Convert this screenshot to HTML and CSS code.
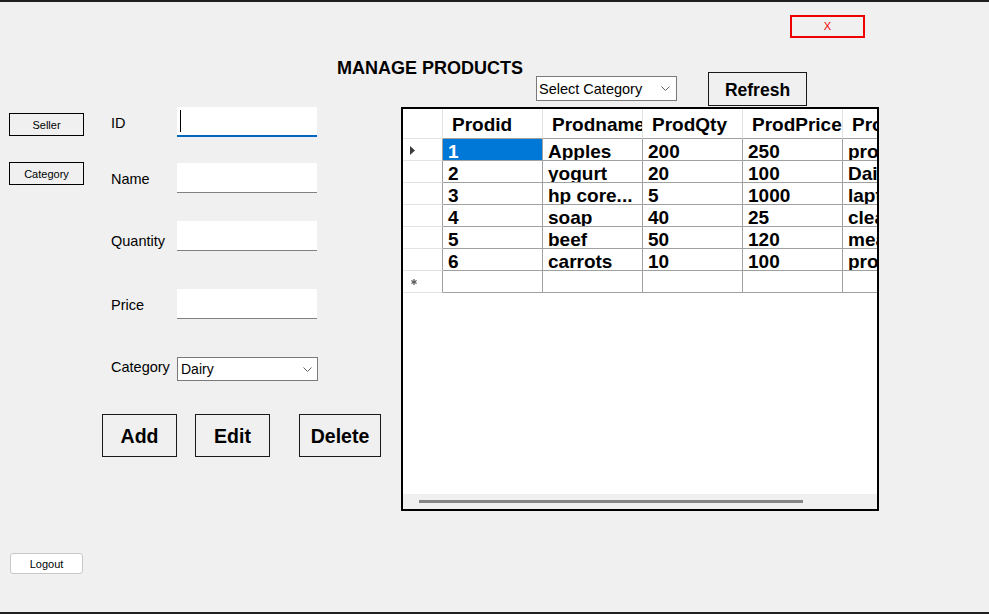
FILE: index.html
```html
<!DOCTYPE html>
<html>
<head>
<meta charset="utf-8">
<link rel="stylesheet" href="styles.css">
</head>
<body>
<div class="strip"></div>
<div class="titlebar"><button class="close">X</button></div>
<div class="header">
  <h1 class="title">MANAGE PRODUCTS</h1>
  <div class="combo combo-filter"><span>Select Category</span><svg class="chev" width="9" height="5" viewBox="0 0 9 5"><polyline points="0.5,0.5 4.5,4.5 8.5,0.5" fill="none" stroke="#606060" stroke-width="1"/></svg></div>
  <button class="btn-big btn-refresh">Refresh</button>
</div>
<div class="main">
  <nav class="nav">
    <button class="nav-btn">Seller</button>
    <button class="nav-btn nav-cat">Category</button>
    <button class="logout">Logout</button>
  </nav>
  <div class="form">
    <div class="row row-id"><label class="lbl">ID</label><div class="field focused"><span class="caret"></span></div></div>
    <div class="row row-name"><label class="lbl">Name</label><div class="field"></div></div>
    <div class="row row-qty"><label class="lbl lbl-low">Quantity</label><div class="field"></div></div>
    <div class="row row-price"><label class="lbl">Price</label><div class="field"></div></div>
    <div class="row row-cat"><label class="lbl lbl-high">Category</label><div class="combo combo-cat"><span>Dairy</span><svg class="chev" width="9" height="5" viewBox="0 0 9 5"><polyline points="0.5,0.5 4.5,4.5 8.5,0.5" fill="none" stroke="#606060" stroke-width="1"/></svg></div></div>
    <div class="actions">
      <button class="btn-big btn-add">Add</button>
      <button class="btn-big btn-edit">Edit</button>
      <button class="btn-big btn-delete">Delete</button>
    </div>
  </div>
  <div class="grid-box">
    <div class="dg">
      <div class="corner"></div>
      <div class="hc">Prodid</div>
      <div class="hc">Prodname</div>
      <div class="hc">ProdQty</div>
      <div class="hc">ProdPrice</div>
      <div class="hc">ProdCat</div>

      <div class="rh"><svg class="arrow" width="5" height="9" viewBox="0 0 5 9"><polygon points="0,0 5,4.5 0,9" fill="#3c3c3c"/></svg></div>
      <div class="c sel">1</div><div class="c">Apples</div><div class="c">200</div><div class="c">250</div><div class="c">produce</div>

      <div class="rh"></div>
      <div class="c">2</div><div class="c">yogurt</div><div class="c">20</div><div class="c">100</div><div class="c">Dairy</div>

      <div class="rh"></div>
      <div class="c">3</div><div class="c">hp core...</div><div class="c">5</div><div class="c">1000</div><div class="c">laptops</div>

      <div class="rh"></div>
      <div class="c">4</div><div class="c">soap</div><div class="c">40</div><div class="c">25</div><div class="c">cleaning</div>

      <div class="rh"></div>
      <div class="c">5</div><div class="c">beef</div><div class="c">50</div><div class="c">120</div><div class="c">meat</div>

      <div class="rh"></div>
      <div class="c">6</div><div class="c">carrots</div><div class="c">10</div><div class="c">100</div><div class="c">produce</div>

      <div class="rh"><svg class="star" width="6" height="6" viewBox="0 0 6 6"><g stroke="#555" stroke-width="1.2"><line x1="3" y1="0" x2="3" y2="6"/><line x1="0.4" y1="1.5" x2="5.6" y2="4.5"/><line x1="0.4" y1="4.5" x2="5.6" y2="1.5"/></g></svg></div>
      <div class="c"></div><div class="c"></div><div class="c"></div><div class="c"></div><div class="c"></div>
    </div>
    <div class="grid-space"></div>
    <div class="hscroll"><div class="thumb"></div></div>
  </div>
</div>
<div class="strip"></div>
</body>
</html>
```

FILE: styles.css
```css
* { box-sizing: border-box; }
html, body { margin: 0; padding: 0; }
body {
  width: 989px;
  height: 614px;
  overflow: hidden;
  background: #f0f0f0;
  font-family: "Liberation Sans", Arial, sans-serif;
  color: #000;
  display: flex;
  flex-direction: column;
}
button {
  font-family: inherit;
  margin: 0;
  padding: 0;
  color: #000;
  background: #f0f0f0;
  cursor: default;
}
.strip { height: 2px; background: #1f1f1f; flex: none; }

.titlebar { height: 56px; flex: none; padding-left: 790px; padding-top: 13px; }
.close {
  width: 75px; height: 23px;
  border: 2px solid #f00000;
  background: #f0f0f0;
  color: #f00000;
  font-size: 11px;
  line-height: 19px;
}

.header { height: 49px; flex: none; display: flex; align-items: flex-start; padding-left: 337px; }
.title {
  margin: 0;
  width: 199px;
  font-size: 18px;
  font-weight: bold;
  line-height: 20px;
  white-space: nowrap;
}
.combo {
  display: flex;
  align-items: center;
  justify-content: space-between;
  background: #fff;
  border: 1px solid #7a7a7a;
  font-size: 14.5px;
  white-space: nowrap;
}
.combo-filter { margin-top: 18px; width: 141px; height: 25px; padding: 0 6px 0 2px; }
.chev { flex: none; }
.btn-big {
  border: 1px solid #1a1a1a;
  background: #f0f0f0;
  font-weight: bold;
  font-size: 19.5px;
}
.btn-refresh { margin-left: 31px; margin-top: 14px; width: 99px; height: 34px; font-size: 17.5px; padding-top: 2px; }

.main { flex: 1; display: flex; align-items: flex-start; min-height: 0; }
.nav {
  margin-left: 9px;
  width: 75px;
  height: 100%;
  display: flex;
  flex-direction: column;
  padding-top: 6px;
  padding-bottom: 38px;
}
.nav-btn {
  width: 75px; height: 23px;
  border: 1px solid #000;
  font-size: 11px;
}
.nav-cat { margin-top: 26px; }
.logout {
  margin-top: auto;
  margin-left: 1px;
  width: 73px; height: 21px;
  border: 1px solid #c8c8c8;
  border-radius: 3px;
  background: #fff;
  font-size: 11px;
}

.form { margin-left: 18px; width: 279px; }
.row { display: flex; align-items: center; }
.lbl {
  width: 75px;
  padding-left: 9px;
  font-size: 14.5px;
  padding-top: 2px;
  white-space: nowrap;
}
.lbl-low { padding-top: 9px; }
.lbl-high { padding-top: 0; margin-top: -4px; }
.field {
  width: 140px;
  height: 30px;
  background: #fff;
  border-bottom: 1px solid #808080;
  position: relative;
}
.field.focused { border-bottom: 2px solid #0067c0; }
.caret {
  position: absolute;
  left: 3px; top: 3px;
  width: 1px; height: 22px;
  background: #000;
}
.row-name { margin-top: 26px; }
.row-qty { margin-top: 28px; }
.row-price { margin-top: 38px; }
.row-cat { margin-top: 38px; }
.combo-cat { width: 141px; height: 24px; padding: 0 5px 0 3px; font-size: 14px; }

.actions { display: flex; margin-top: 33px; }
.actions .btn-big { height: 43px; padding-top: 2px; }
.btn-add { width: 75px; }
.btn-edit { width: 75px; margin-left: 18px; }
.btn-delete { width: 82px; margin-left: 29px; }

.grid-box {
  margin-left: 20px;
  width: 478px;
  height: 404px;
  border: 2px solid #000;
  background: #fff;
  display: flex;
  flex-direction: column;
  overflow: hidden;
}
.dg {
  display: grid;
  grid-template-columns: 40px repeat(5, 100px);
  grid-template-rows: 30px;
  grid-auto-rows: 22px;
  width: 540px;
  flex: none;
}
.corner {
  border-right: 1px solid #e3e3e3;
  border-bottom: 1px solid #e3e3e3;
}
.hc {
  border-right: 1px solid #e3e3e3;
  border-bottom: 1px solid #a0a0a0;
  padding: 5px 0 0 9px;
  font-size: 19px;
  font-weight: bold;
  line-height: 22px;
  white-space: nowrap;
  overflow: hidden;
}
.rh {
  border-right: 1px solid #a0a0a0;
  border-bottom: 1px solid #e3e3e3;
  display: flex;
  align-items: center;
  padding-left: 7px;
}
.arrow { margin-top: 1px; }
.star { margin-left: 1px; margin-top: 1px; }
.c {
  border-right: 1px solid #a0a0a0;
  border-bottom: 1px solid #a0a0a0;
  padding: 2px 0 0 5px;
  font-size: 19px;
  font-weight: bold;
  line-height: 22px;
  white-space: nowrap;
  overflow: hidden;
}
.c.sel { background: #0078d7; color: #fff; background-clip: padding-box; }
.grid-space { flex: 1; }
.hscroll { height: 15px; flex: none; background: #f0f0f0; padding-top: 6px; padding-left: 16px; }
.thumb { width: 384px; height: 3px; background: #858585; }
```
